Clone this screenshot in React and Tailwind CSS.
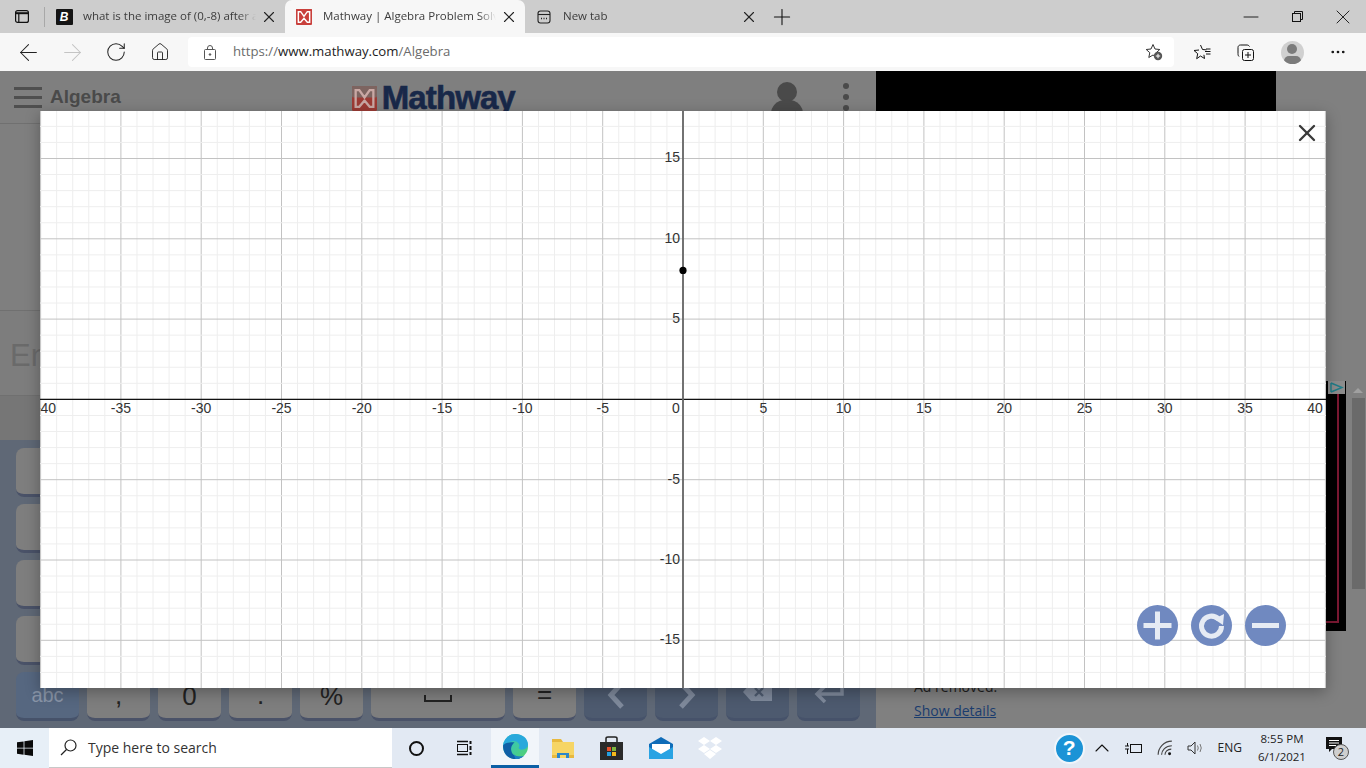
import { ArrowLeft, ArrowRight, RotateCw, Plus, X, Minus, ChevronUp, Ellipsis, House } from 'lucide-react'

const xMajor = [-40, -35, -30, -25, -20, -15, -10, -5, 5, 10, 15, 20, 25, 30, 35, 40]
const yMajor = [15, 10, 5, -5, -10, -15]
const unit = 16.06
const originX = 643
const originY = 288.4

function range(a, b) {
  const out = []
  for (let i = a; i <= b; i++) out.push(i)
  return out
}

function GraphGrid() {
  return (
    <svg width="1286" height="577" className="block font-['Liberation_Sans',sans-serif]">
      {range(-40, 40).map((i) => (
        <line key={'vm' + i} x1={originX + i * unit} x2={originX + i * unit} y1="0" y2="577" stroke={i % 5 === 0 ? '#c2c2c2' : '#eeeeee'} />
      ))}
      {range(-18, 18).map((i) => (
        <line key={'hm' + i} y1={originY + i * unit} y2={originY + i * unit} x1="0" x2="1286" stroke={i % 5 === 0 ? '#c2c2c2' : '#eeeeee'} />
      ))}
      <line x1="0" x2="1286" y1={originY} y2={originY} stroke="#111" strokeWidth="1.2" />
      <line x1={originX} x2={originX} y1="0" y2="577" stroke="#666" strokeWidth="1.8" />
      <circle cx={originX} cy={originY - 8 * unit - 0.5} r="3.6" fill="#000" />
      {xMajor.map((v) => {
        let x = originX + v * unit
        if (v === -40) x = 6
        if (v === 40) x = 1275
        return (
          <text key={v} x={x} y={originY + 14} fontSize="14" fill="#333" textAnchor="middle">
            {v}
          </text>
        )
      })}
      <text x={originX - 7} y={originY + 14} fontSize="14" fill="#333" textAnchor="middle">0</text>
      {yMajor.map((v) => (
        <text key={v} x={originX - 3} y={originY - v * unit + (v === 15 ? 3 : 4)} fontSize="14" fill="#333" textAnchor="end">
          {v}
        </text>
      ))}
    </svg>
  )
}

function Tab({ active, icon, title }) {
  return (
    <div className={'relative flex h-[33px] w-[240px] items-center pl-[9px] ' + (active ? 'rounded-t-[7px] bg-[#f7f7f7]' : '')}>
      <div className="flex w-[20px] justify-center">{icon}</div>
      <div className="ml-[9px] w-[173px] overflow-hidden whitespace-nowrap pb-[2px] text-[11.5px] text-[#3c3c3c] [mask-image:linear-gradient(90deg,#000_90%,transparent)]">{title}</div>
      <X size={18} strokeWidth={1.5} className="ml-[4px] shrink-0 text-[#222]" />
    </div>
  )
}

function MathwayMark({ size, dim }) {
  return (
    <svg width={size} height={size} viewBox="0 0 24 24">
      <rect width="24" height="24" rx="1.5" fill={dim ? '#9c3b35' : '#c9403c'} />
      <rect width="24" height="11" rx="1.5" fill={dim ? '#7d6460' : '#c9403c'} />
      <path d="M3.5 20V4h3.5l5 7 5-7h3.5v16h-3.5l-5-6-5 6z" fill="none" stroke={dim ? '#c9a8a4' : '#fff'} strokeWidth="2.2" />
    </svg>
  )
}

function TabBar() {
  return (
    <div className="flex h-[33px] items-center bg-[#cdcdcd]">
      <div className="flex w-[44px] justify-center">
        <svg width="14" height="13" viewBox="0 0 14 13" fill="none" stroke="#111" strokeWidth="1.2">
          <rect x="0.6" y="0.6" width="12.8" height="11.8" rx="2" />
          <path d="M0.6 3.2h12.8" strokeWidth="2" />
          <path d="M3.8 3v9" />
        </svg>
      </div>
      <div className="h-[20px] w-px bg-[#a8a8a8]" />
      <Tab
        title="what is the image of (0,-8) after a"
        icon={
          <div className="flex h-[16px] w-[17px] items-center justify-center rounded-[1px] bg-[#141414] text-[12px] font-bold italic leading-none text-white font-['Liberation_Sans',sans-serif]">B</div>
        }
      />
      <Tab active title="Mathway | Algebra Problem Solver" icon={<MathwayMark size={16} />} />
      <Tab
        title="New tab"
        icon={
          <svg width="14" height="14" viewBox="0 0 14 14" fill="none" stroke="#222" strokeWidth="1.1">
            <rect x="1" y="1" width="12" height="12" rx="2.5" />
            <path d="M1 4.5h12" />
            <path d="M4 8.5h1M6.5 8.5h1M9 8.5h1" strokeWidth="1.4" />
          </svg>
        }
      />
      <Plus size={26} strokeWidth={1} className="ml-[4px] text-[#111]" />
      <div className="ml-auto flex items-center">
        <div className="flex w-[46px] justify-center"><Minus size={24} strokeWidth={0.9} className="text-[#111]" /></div>
        <div className="flex w-[46px] justify-center">
          <svg width="11" height="11" viewBox="0 0 11 11" fill="none" stroke="#111">
            <rect x="0.5" y="2.5" width="8" height="8" />
            <path d="M2.5 2.5v-2h8v8h-2" />
          </svg>
        </div>
        <div className="flex w-[46px] justify-center"><X size={24} strokeWidth={0.9} className="text-[#111]" /></div>
      </div>
    </div>
  )
}

function Toolbar() {
  return (
    <div className="flex h-[38px] items-center bg-[#f7f7f7] pl-[6px]">
      <div className="flex w-[44px] justify-center"><ArrowLeft size={27} strokeWidth={0.9} className="text-[#222]" /></div>
      <div className="flex w-[44px] justify-center"><ArrowRight size={27} strokeWidth={0.9} className="text-[#c4c4c4]" /></div>
      <div className="flex w-[44px] justify-center"><RotateCw size={22} strokeWidth={1.1} className="text-[#222]" /></div>
      <div className="flex w-[44px] justify-center"><House size={20} strokeWidth={1.1} className="text-[#222]" /></div>
      <div className="ml-[6px] flex h-[30px] w-[986px] items-center rounded-[4px] bg-white pl-[16px]">
        <svg width="12" height="15" viewBox="0 0 12 15" fill="none" stroke="#555">
          <rect x="0.5" y="4.5" width="11" height="10" rx="1" />
          <path d="M3.5 4.5v-1.5a2.5 2.5 0 0 1 5 0v1.5" />
          <circle cx="6" cy="9.5" r="0.8" fill="#555" />
        </svg>
        <div className="ml-[17px] text-[13.2px] text-[#6b6b6b]">
          https://<span className="text-[#1d1d1d]">www.mathway.com</span>/Algebra
        </div>
        <svg width="18" height="18" viewBox="0 0 18 18" fill="none" stroke="#333" className="ml-auto mr-[11px]">
          <path d="M8 1.5l2 4.5 4.8.5-3.6 3.2 1 4.8L8 12l-4.2 2.5 1-4.8L1.2 6.5 6 6z" strokeLinejoin="round" />
          <circle cx="13" cy="13" r="4.2" fill="#555" stroke="none" />
          <path d="M13 10.8v4.4M10.8 13h4.4" stroke="#fff" />
        </svg>
      </div>
      <div className="flex w-[56px] justify-center">
        <svg width="18" height="17" viewBox="0 0 18 17" fill="none" stroke="#111">
          <path d="M7.5 1l2 4.5 4 .4M6 6l-5 .5 3.7 3.2-1 5L7.5 12l4 2.5-.6-3.7" strokeLinejoin="round" />
          <path d="M12 7.5h5.5M13 10h4.5M13 5h4.5" />
        </svg>
      </div>
      <div className="ml-[-2px] flex w-[34px] justify-center">
        <svg width="17" height="17" viewBox="0 0 17 17" fill="none" stroke="#111">
          <path d="M2 12.5c-1-1-1-2-1-3V3.5c0-1.4 1-2.500 2.500-2.500H10c1 0 2 .6 2.500 1.500" />
          <rect x="5.5" y="5.5" width="11" height="11" rx="2" />
          <path d="M11 8v6M8 11h6" />
        </svg>
      </div>
      <div className="ml-[13px] flex w-[34px] justify-center">
        <div className="relative h-[23px] w-[23px] overflow-hidden rounded-full bg-[#d0d0d0]">
          <div className="absolute left-[6px] top-[3px] h-[10px] w-[10px] rounded-full bg-[#7b7b7b]" />
          <div className="absolute left-[3px] top-[15px] h-[10px] w-[17px] rounded-full bg-[#7b7b7b]" />
        </div>
      </div>
      <div className="ml-[12px] flex w-[34px] justify-center"><Ellipsis size={18} strokeWidth={1.6} className="text-[#111]" /></div>
    </div>
  )
}

function Key({ label, dark, className, children }) {
  return (
    <div
      className={
        'flex h-[49px] items-center justify-center rounded-[8px] border-b-[3px] ' +
        (dark ? 'border-[#46526a] bg-[#4d5a6f] text-[#7f8ca0] ' : 'border-[#4a5268] bg-[#7e7e7e] text-[#222] ') +
        (className || '')
      }
    >
      {label}
      {children}
    </div>
  )
}

function Keyboard() {
  return (
    <div className="flex h-[288px] flex-col gap-[7px] bg-[#5f6876] pl-[16px] pt-[8px]">
      {[0, 1, 2, 3].map((r) => (
        <div key={r} className="flex">
          <Key className="w-[63px]" />
        </div>
      ))}
      <div className="flex gap-[8px] text-[26px] leading-none font-['Liberation_Sans',sans-serif]">
        <Key dark label="abc" className="w-[63px] !bg-[#566780] pb-[1px] text-[20px] !text-[#8995a8]" />
        <Key label="," className="w-[63px]" />
        <Key label="0" className="w-[63px] pt-[1px]" />
        <Key label="." className="w-[63px]" />
        <Key label="%" className="w-[63px] pt-[1px]" />
        <Key className="w-[134px]">
          <svg width="28" height="10" viewBox="0 0 28 10" fill="none" stroke="#222" strokeWidth="2" className="mt-[6px]">
            <path d="M1 2v6h26V2" />
          </svg>
        </Key>
        <Key label="=" className="w-[63px] pb-[2px]" />
        <Key dark className="w-[63px]">
          <svg width="18" height="30" viewBox="0 0 18 30" fill="none" stroke="#7f8a9c" strokeWidth="5"><path d="M15 3L4 15l11 12" /></svg>
        </Key>
        <Key dark className="w-[63px]">
          <svg width="18" height="30" viewBox="0 0 18 30" fill="none" stroke="#7f8a9c" strokeWidth="5"><path d="M3 3l11 12L3 27" /></svg>
        </Key>
        <Key dark className="w-[63px]">
          <svg width="30" height="20" viewBox="0 0 30 20" className="mb-[4px]">
            <path d="M8 0h21v18H8L0 9z" fill="#7f8a9c" />
            <path d="M12 5l8 8M20 5l-8 8" stroke="#4d5a6f" strokeWidth="2.4" />
          </svg>
        </Key>
        <Key dark className="w-[63px]">
          <svg width="30" height="22" viewBox="0 0 30 22" fill="none" stroke="#7f8a9c" strokeWidth="3.5" className="mb-[2px]">
            <path d="M28 0v11H4M11 3l-8 8 8 8" />
          </svg>
        </Key>
      </div>
    </div>
  )
}

function PageLeft() {
  return (
    <div className="w-[876px]">
      <div className="flex h-[53px] items-center border-b border-[#707070] bg-[#7f7f7f] pl-[14px]">
        <div className="flex flex-col gap-[6px]">
          <div className="h-[3px] w-[28px] bg-[#4f4f4f]" />
          <div className="h-[3px] w-[28px] bg-[#4f4f4f]" />
          <div className="h-[3px] w-[28px] bg-[#4f4f4f]" />
        </div>
        <div className="ml-[8px] text-[19px] font-bold text-[#4a4a4a] font-['Liberation_Sans',sans-serif]">Algebra</div>
        <div className="ml-[231px] pt-[3px]"><MathwayMark size={25} dim /></div>
        <div className="ml-[5px] w-[134px] whitespace-nowrap text-[33px] font-bold leading-none tracking-[-0.9px] text-[#182849] [-webkit-text-stroke:0.6px_#182849] font-['Liberation_Sans',sans-serif]">Mathway</div>
        <div className="relative ml-[255px] mt-[9px] h-[40px] w-[32px]">
          <div className="absolute left-[6px] top-0 h-[20px] w-[20px] rounded-full bg-[#4a4a4a]" />
          <div className="absolute left-0 top-[18px] h-[22px] w-[32px] rounded-t-[14px] bg-[#4a4a4a]" />
        </div>
        <div className="ml-[40px] flex flex-col gap-[5px]">
          <div className="h-[6px] w-[6px] rounded-full bg-[#4a4a4a]" />
          <div className="h-[6px] w-[6px] rounded-full bg-[#4a4a4a]" />
          <div className="h-[6px] w-[6px] rounded-full bg-[#4a4a4a]" />
        </div>
      </div>
      <div className="h-[187px] border-b border-[#707070] bg-[#7f7f7f]" />
      <div className="flex h-[85px] items-center border-b border-[#707070] bg-[#7d7d7d] pl-[10px] pt-[6px] text-[31px] text-[#6a6a6a] font-['Liberation_Sans',sans-serif]">Enter</div>
      <div className="h-[44px] bg-[#767676]" />
      <Keyboard />
    </div>
  )
}

function PageRight() {
  return (
    <div className="flex flex-1 bg-[#808080]">
      <div className="w-[474px]">
        <div className="h-[140px] w-[400px] bg-black" />
        <div className="relative mt-[170px] h-[250px] w-[470px] bg-black">
          <div className="absolute left-[450px] top-[13px] h-[229px] w-[13px] border-b-2 border-r-2 border-[#7a1832]" />
          <div className="absolute right-[1px] top-0 flex h-[13px] w-[17px] items-center justify-center bg-[#8c8c8c]">
            <svg width="14" height="11" viewBox="0 0 14 11" fill="none" stroke="#1f7c88" strokeWidth="1.4">
              <path d="M1 1v9M1 1l11 4.5L1 10" />
            </svg>
          </div>
        </div>
        <div className="ml-[38px] mt-[45px] text-[14px] text-[#1e1e1e] font-['Open_Sans',sans-serif]">Ad removed.</div>
        <div className="ml-[38px] mt-[3px] text-[14px] text-[#1a3c6e] underline font-['Open_Sans',sans-serif]">Show details</div>
      </div>
      <div className="w-[16px] pt-[317px]">
        <div className="mx-auto h-0 w-0 border-x-[5px] border-b-[5px] border-x-transparent border-b-[#a0a0a0]" />
        <div className="mx-auto mt-[5px] h-[191px] w-[13px] bg-[#6a6a6a]" />
      </div>
    </div>
  )
}

function RoundButton({ children }) {
  return (
    <div className="flex h-[41px] w-[41px] items-center justify-center rounded-full bg-[#7089c0]">
      <svg width="41" height="41" viewBox="0 0 41 41" fill="none" stroke="#e6ebf4" strokeWidth="5">
        {children}
      </svg>
    </div>
  )
}

function GraphModal() {
  return (
    <div className="absolute left-[40px] top-[40px] h-[577px] w-[1286px] overflow-hidden bg-white shadow-[0_4px_14px_rgba(0,0,0,0.3)]">
      <GraphGrid />
      <X size={28} strokeWidth={2} className="absolute right-[5px] top-[8px] text-[#3a3a3a]" />
      <div className="absolute left-[1097px] top-[494px] flex gap-[13px]">
        <RoundButton><path d="M6.5 20.5h28M20.5 6.5v28" /></RoundButton>
        <RoundButton>
          <path d="M27.5 14a10 10 0 1 0 3 7" />
          <path d="M23 14l10-5-1 11z" fill="#e6ebf4" stroke="none" />
        </RoundButton>
        <RoundButton><path d="M7 20.5h27" /></RoundButton>
      </div>
    </div>
  )
}

function EdgeIcon() {
  return (
    <svg width="25" height="25" viewBox="0 0 24 24">
      <defs>
        <linearGradient id="edgeA" x1="0" y1="0" x2="1" y2="1">
          <stop offset="0" stopColor="#2bc3d2" />
          <stop offset="1" stopColor="#55d16c" />
        </linearGradient>
      </defs>
      <circle cx="12" cy="12" r="12" fill="url(#edgeA)" />
      <path d="M0 11C1 4 6 0 12 0c6 0 12 4 12 10 0 3-3 5-6 5-2 0-3-1-3-2 1-1 1-3 0-4-2-3-6-3-9-1-3 1-5 3-6 3z" fill="#29a9dc" />
      <path d="M0 11c0 8 5 13 12 13 3 0 6-1 8-3-4 2-11 1-12-5-1-3 1-6 3-8-5 0-9 0-11 3z" fill="#0f5fa6" />
      <path d="M12 24c3 0 6-1 8-3-4 1-8 1-10-2z" fill="#1b7fc4" />
    </svg>
  )
}

function Taskbar() {
  return (
    <div className="flex h-[40px] items-center bg-[#e2e9f3] text-[#222] font-['Open_Sans',sans-serif]">
      <div className="flex h-full w-[49px] items-center justify-center bg-[#e7eff7]">
        <svg width="16" height="16" viewBox="0 0 16 16" fill="#0a0a0a"><path d="M0 2.3l6.6-.9v6.300H0zM7.400 1.300L16 0v7.700H7.400zM0 8.400h6.600v6.300L0 13.800zM7.400 8.400H16V16l-8.600-1.200z" /></svg>
      </div>
      <div className="flex h-full w-[343px] items-center border-b border-[#c8c8c8] bg-white pl-[11px]">
        <svg width="17" height="17" viewBox="0 0 17 17" fill="none" stroke="#222" strokeWidth="1.2"><circle cx="10.5" cy="6.5" r="5.5" /><path d="M6.5 10.5L1 16" /></svg>
        <div className="ml-[11px] text-[14px] text-[#333]">Type here to search</div>
      </div>
      <div className="flex w-[48px] justify-center">
        <div className="h-[15px] w-[15px] rounded-full border-[2px] border-[#111]" />
      </div>
      <div className="flex w-[48px] justify-center">
        <svg width="17" height="16" viewBox="0 0 17 16" fill="none" stroke="#111">
          <rect x="1.5" y="4.5" width="10" height="7" />
          <path d="M1 1.5h11M1 14.500h11" strokeWidth="1.6" />
          <path d="M14.500 1v3M14.500 6v4M14.500 12v3" strokeWidth="2" />
        </svg>
      </div>
      <div className="ml-[3px] flex h-full w-[48px] items-center justify-center border-b-[3px] border-[#0b5fa5] bg-[#f1f5fa]"><EdgeIcon /></div>
      <div className="flex w-[48px] justify-center">
        <svg width="22" height="19" viewBox="0 0 22 19">
          <path d="M0 0h9l2 3h11v16H0z" fill="#e8b93e" />
          <path d="M0 3h22v13H0z" fill="#f6d565" />
          <path d="M5 19v-5h12v5z" fill="#2c87c9" />
          <path d="M8 19v-3h6v3z" fill="#f6d565" />
        </svg>
      </div>
      <div className="flex w-[49px] justify-center">
        <svg width="23" height="24" viewBox="0 0 23 24">
          <path d="M6 6V2.5Q6 1 8 1h7q2 0 2 1.500V6" fill="none" stroke="#222" strokeWidth="1.5" />
          <rect y="6" width="23" height="18" fill="#2a2a2a" />
          <rect x="7" y="11" width="4" height="4" fill="#e8502c" />
          <rect x="12" y="11" width="4" height="4" fill="#7db63e" />
          <rect x="7" y="16" width="4" height="4" fill="#23a0e0" />
          <rect x="12" y="16" width="4" height="4" fill="#f4b91c" />
        </svg>
      </div>
      <div className="flex w-[49px] justify-center">
        <svg width="24" height="22" viewBox="0 0 24 22">
          <path d="M0 7l12-7 12 7v15H0z" fill="#0f6cb8" />
          <path d="M3 7h18v6l-9 5-9-5z" fill="#fff" />
          <path d="M0 10l12 7 12-7v12H0z" fill="#29a3e3" />
        </svg>
      </div>
      <div className="flex w-[49px] justify-center">
        <svg width="24" height="23" viewBox="0 0 24 23" fill="#fff">
          <path d="M6 0l6 4-6 4-6-4zM18 0l6 4-6 4-6-4zM6 8l6 4-6 4-6-4zM18 8l6 4-6 4-6-4zM6 17l6-4 6 4-6 5z" />
        </svg>
      </div>
      <div className="ml-auto flex items-center">
        <div className="relative flex h-[31px] w-[31px] items-center justify-center rounded-full border-[2px] border-[#f0f5fa] bg-[#1b93d6] text-[21px] font-bold text-white font-['Liberation_Sans',sans-serif]">?</div>
        <ChevronUp size={24} strokeWidth={1.1} className="ml-[5px] text-[#111]" />
        <svg width="17" height="13" viewBox="0 0 17 13" fill="none" stroke="#111" className="ml-[11px]">
          <rect x="5.5" y="2.5" width="11" height="8" />
          <path d="M0 4h4M0 7h4M2.500 1v3M2.500 7v5" />
        </svg>
        <svg width="16" height="16" viewBox="0 0 14 14" fill="none" stroke="#444" className="ml-[15px]">
          <path d="M1 13C1 7 6 1 13 1M4 13c0-4 3.500-8 9-8M7 13c0-2.500 2-5 5.500-5" />
          <circle cx="11" cy="12" r="1.3" fill="#111" stroke="none" />
        </svg>
        <svg width="17" height="14" viewBox="0 0 17 14" fill="none" stroke="#333" className="ml-[14px]">
          <path d="M1 5h3l4-4v12l-4-4H1z" />
          <path d="M10.500 4.500q1.500 2.500 0 5M13 3q2.500 4 0 8" stroke="#777" />
        </svg>
        <div className="ml-[14px] text-[12px] text-[#222]">ENG</div>
        <div className="ml-[16px] flex w-[48px] flex-col items-center text-[11.5px] leading-[18px] text-[#222]">
          <div>8:55 PM</div>
          <div>6/1/2021</div>
        </div>
        <div className="relative ml-[20px] mr-[17px] h-[23px] w-[23px]">
          <svg width="16" height="16" viewBox="0 0 16 16" className="absolute left-0 top-0">
            <path d="M0 0h16v12H6l-3 3v-3H0z" fill="#111" />
            <path d="M3 3.5h10M3 6h10M3 8.500h7" stroke="#fff" />
          </svg>
          <div className="absolute bottom-0 right-0 flex h-[16px] w-[16px] items-center justify-center rounded-full border border-[#555] bg-[#cfcfcf] text-[11px] leading-none text-[#222]">2</div>
        </div>
      </div>
    </div>
  )
}

export default function App() {
  return (
    <div className="h-[768px] w-[1366px] overflow-hidden font-['Open_Sans',sans-serif]">
      <TabBar />
      <Toolbar />
      <div className="relative flex h-[657px] overflow-hidden">
        <PageLeft />
        <PageRight />
        <GraphModal />
      </div>
      <Taskbar />
    </div>
  )
}
